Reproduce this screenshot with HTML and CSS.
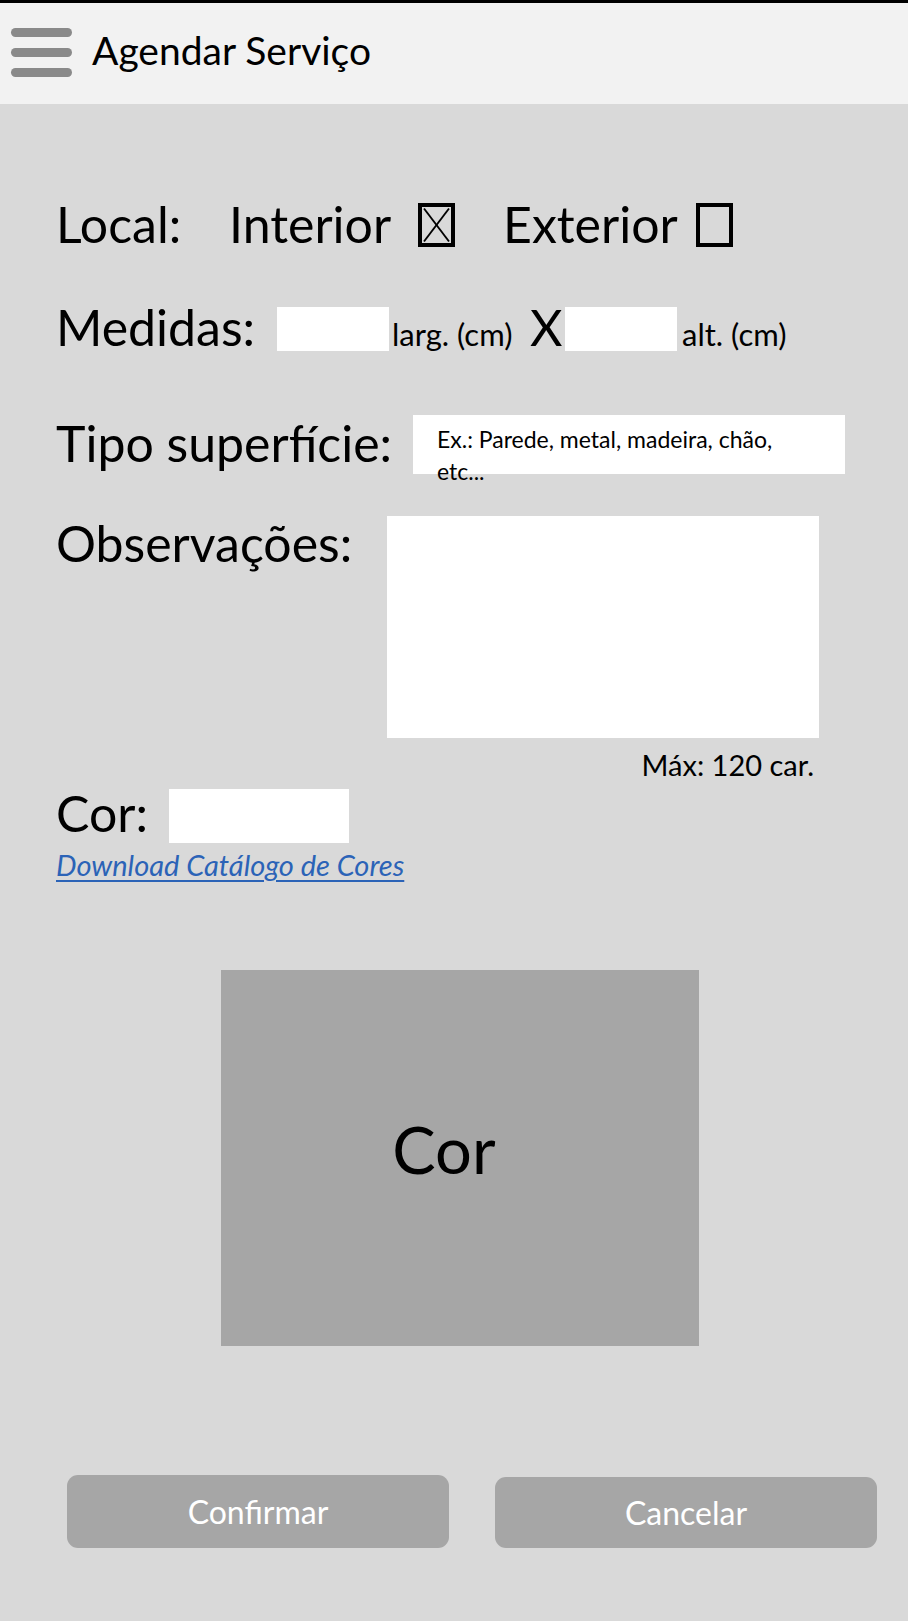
FILE: index.html
```html
<!DOCTYPE html>
<html lang="pt">
<head>
<meta charset="utf-8">
<title>Agendar Serviço</title>
<link rel="stylesheet" href="styles.css">
</head>
<body>
<header class="topbar">
  <div class="menu"><span class="bar"></span><span class="bar"></span><span class="bar"></span></div>
  <h1 class="title">Agendar Serviço</h1>
</header>
<main class="form">
  <div class="row row-local">
    <span class="label w-local">Local:</span><span class="label w-interior">Interior</span><svg class="check" width="37" height="44" viewBox="0 0 37 44"><rect x="2" y="2" width="33" height="40" fill="none" stroke="#000" stroke-width="4"/><line x1="6" y1="5.5" x2="31" y2="38.5" stroke="#000" stroke-width="1.9"/><line x1="31" y1="5.5" x2="6" y2="38.5" stroke="#000" stroke-width="1.9"/></svg><span class="label w-exterior">Exterior</span><svg class="check" width="37" height="44" viewBox="0 0 37 44"><rect x="2" y="2" width="33" height="40" fill="none" stroke="#000" stroke-width="4"/></svg>
  </div>
  <div class="row row-medidas">
    <span class="label w-medidas">Medidas:</span><span class="field field-size"></span><span class="unit w-larg">larg. (cm)</span><span class="label w-x">X</span><span class="field field-size"></span><span class="unit unit-alt">alt. (cm)</span>
  </div>
  <div class="frow row-tipo">
    <span class="label w-tipo">Tipo superfície:</span>
    <div class="field field-tipo">Ex.: Parede, metal, madeira, chão,<br>etc...</div>
  </div>
  <div class="frow row-obs">
    <span class="label w-obs">Observações:</span>
    <div class="obs-col">
      <div class="field field-obs"></div>
      <div class="note">Máx: 120 car.</div>
    </div>
  </div>
  <div class="row row-cor">
    <span class="label w-cor">Cor:</span><span class="field field-cor"></span>
  </div>
  <div class="link-row"><a class="link" href="#">Download Catálogo de Cores</a></div>
  <div class="preview"><span class="preview-text">Cor</span></div>
  <div class="actions">
    <button class="btn btn-confirm">Confirmar</button>
    <button class="btn btn-cancel">Cancelar</button>
  </div>
</main>
</body>
</html>
```
FILE: styles.css
```css
html, body {
  margin: 0;
  padding: 0;
  background: #d9d9d9;
}
body {
  width: 908px;
  min-height: 1621px;
  font-family: Lato, "Liberation Sans", sans-serif;
  color: #000;
}
.topbar {
  box-sizing: border-box;
  height: 104px;
  border-top: 3px solid #000;
  background: #f2f2f2;
  display: flex;
  align-items: flex-start;
  padding: 25px 0 0 11px;
}
.menu {
  display: flex;
  flex-direction: column;
  gap: 11px;
  width: 61px;
}
.bar {
  display: block;
  height: 9px;
  border-radius: 4.5px;
  background: #8a8a8a;
}
.title {
  margin: 1px 0 0 20px;
  font-size: 39px;
  font-weight: 400;
  line-height: 43px;
}
.form {
  padding: 0 0 0 56px;
}
.row {
  font-size: 50px;
  line-height: 60px;
  height: 60px;
  white-space: nowrap;
}
.label {
  display: inline-block;
}
.row-local { margin-top: 90px; }
.w-local { width: 173px; }
.w-interior { width: 189px; }
.w-exterior { width: 193px; margin-left: 48px; }
.check {
  display: inline-block;
  vertical-align: -4px;
}
.row-medidas { margin-top: 43px; }
.w-medidas { width: 221px; }
.field { background: #fff; }
.field-size {
  display: inline-block;
  width: 112px;
  height: 44px;
  vertical-align: -5px;
}
.unit {
  display: inline-block;
  font-size: 31px;
}
.w-larg { width: 138px; margin-left: 3px; }
.w-x { width: 35px; }
.unit-alt { margin-left: 5px; }
.frow {
  display: flex;
  align-items: flex-start;
  font-size: 50px;
  line-height: 60px;
}
.row-tipo { margin-top: 56px; height: 60px; }
.w-tipo { width: 357px; flex: none; }
.field-tipo {
  box-sizing: border-box;
  width: 432px;
  height: 59px;
  margin-top: 2px;
  padding: 8px 12px 0 24px;
  font-size: 23px;
  line-height: 32px;
}
.row-obs { margin-top: 40px; }
.w-obs { width: 331px; flex: none; }
.obs-col {
  display: flex;
  flex-direction: column;
  align-items: flex-end;
  width: 432px;
}
.field-obs {
  width: 432px;
  height: 222px;
  margin-top: 3px;
}
.note {
  margin-top: 10px;
  padding-right: 5px;
  font-size: 29px;
  line-height: 34px;
}
.row-cor { margin-top: 1px; }
.w-cor { width: 113px; }
.field-cor {
  display: inline-block;
  width: 180px;
  height: 54px;
  vertical-align: -11px;
}
.link-row {
  margin-top: 6px;
  font-size: 29px;
  line-height: 32px;
}
.link {
  color: #2b63b7;
  font-style: italic;
  text-decoration: underline;
  text-decoration-thickness: 2px;
  text-underline-offset: 4px;
}
.preview {
  box-sizing: border-box;
  width: 478px;
  height: 376px;
  margin: 89px 0 0 165px;
  background: #a6a6a6;
  display: flex;
  align-items: center;
  justify-content: center;
  padding: 0 32px 18px 0;
}
.preview-text {
  font-size: 65px;
  line-height: 78px;
}
.actions {
  display: flex;
  align-items: flex-start;
  gap: 46px;
  margin: 129px 0 0 11px;
}
.btn {
  width: 382px;
  border: 0;
  border-radius: 11px;
  background: #a6a6a6;
  color: #fff;
  font-family: Lato, "Liberation Sans", sans-serif;
  font-size: 32px;
  padding: 0;
}
.btn-confirm { height: 73px; }
.btn-cancel { height: 71px; margin-top: 2px; }
```
